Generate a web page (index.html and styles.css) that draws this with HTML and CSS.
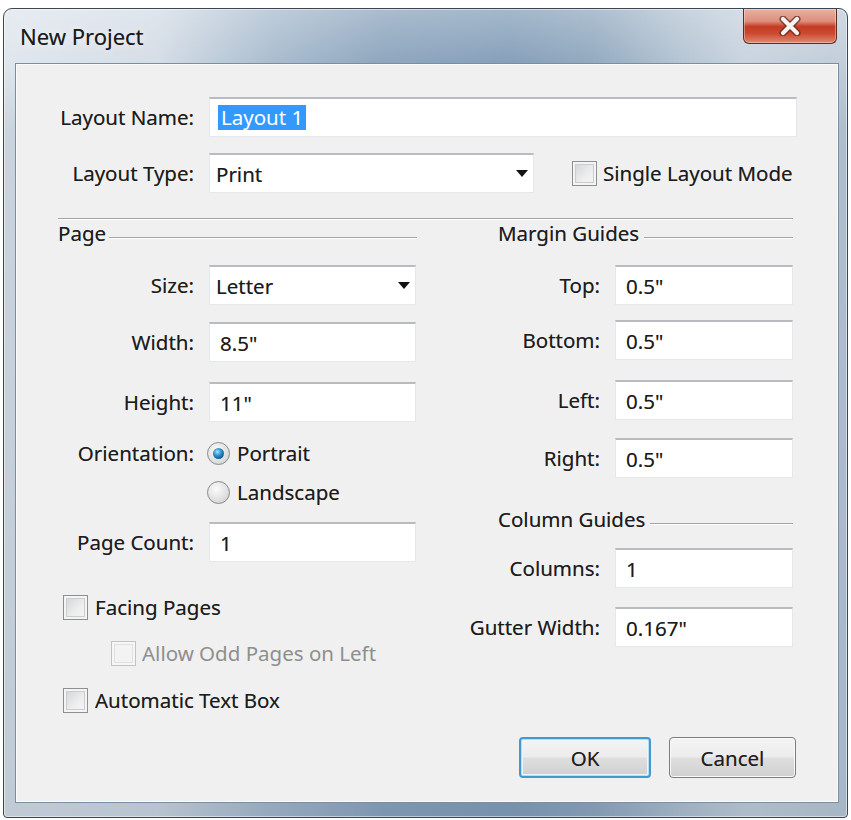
FILE: index.html
```html
<!DOCTYPE html>
<html lang="en">
<head>
<meta charset="utf-8">
<title>New Project</title>
<link rel="stylesheet" href="styles.css">
</head>
<body>
<div class="window">
  <div class="titlebar">
    <span class="title">New Project</span>
    <div class="close">
      <svg width="24" height="20" viewBox="0 0 24 20">
        <path d="M5 3 L19 17 M19 3 L5 17" stroke="#5a2419" stroke-width="7" stroke-linecap="round" fill="none" opacity="0.7"/>
        <path d="M5 3 L19 17 M19 3 L5 17" stroke="#f7f4f2" stroke-width="4.2" stroke-linecap="round" fill="none"/>
      </svg>
    </div>
  </div>
  <div class="client">
    <div class="row r-name">
      <span class="lbl lbl-l">Layout Name:</span>
      <div class="field name"><span class="selected">Layout 1</span></div>
    </div>
    <div class="row r-type">
      <span class="lbl lbl-l">Layout Type:</span>
      <div class="field select type"><span>Print</span><span class="arrow"></span></div>
      <div class="check single"><span class="box"></span><span>Single Layout Mode</span></div>
    </div>
    <div class="sep"></div>
    <div class="cols">
      <div class="col left">
        <div class="group"><span>Page</span><span class="gline gline-page"></span></div>
        <div class="row frow m20">
          <span class="lbl lbl-l">Size:</span>
          <div class="field select lfield"><span>Letter</span><span class="arrow"></span></div>
        </div>
        <div class="row frow m17">
          <span class="lbl lbl-l">Width:</span>
          <div class="field lfield">8.5"</div>
        </div>
        <div class="row frow m20">
          <span class="lbl lbl-l">Height:</span>
          <div class="field lfield">11"</div>
        </div>
        <div class="row orow m16">
          <span class="lbl lbl-l">Orientation:</span>
          <div class="radio-item"><span class="radio on"></span><span>Portrait</span></div>
        </div>
        <div class="row orow m9">
          <span class="lbl lbl-l"></span>
          <div class="radio-item"><span class="radio"></span><span>Landscape</span></div>
        </div>
        <div class="row frow m15">
          <span class="lbl lbl-l">Page Count:</span>
          <div class="field lfield">1</div>
        </div>
        <div class="check crow m30 c-first"><span class="box"></span><span>Facing Pages</span></div>
        <div class="check crow m16 c-indent disabled"><span class="box"></span><span>Allow Odd Pages on Left</span></div>
        <div class="check crow m17 c-first"><span class="box"></span><span>Automatic Text Box</span></div>
      </div>
      <div class="col right">
        <div class="group"><span>Margin Guides</span><span class="gline"></span></div>
        <div class="row frow m20">
          <span class="lbl lbl-r">Top:</span>
          <div class="field rfield">0.5"</div>
        </div>
        <div class="row frow m15">
          <span class="lbl lbl-r">Bottom:</span>
          <div class="field rfield">0.5"</div>
        </div>
        <div class="row frow m20">
          <span class="lbl lbl-r">Left:</span>
          <div class="field rfield">0.5"</div>
        </div>
        <div class="row frow m18">
          <span class="lbl lbl-r">Right:</span>
          <div class="field rfield">0.5"</div>
        </div>
        <div class="group m29"><span>Column Guides</span><span class="gline"></span></div>
        <div class="row frow m17">
          <span class="lbl lbl-r">Columns:</span>
          <div class="field rfield">1</div>
        </div>
        <div class="row frow m19">
          <span class="lbl lbl-r">Gutter Width:</span>
          <div class="field rfield">0.167"</div>
        </div>
        <div class="buttons">
          <div class="btn ok">OK</div>
          <div class="btn cancel">Cancel</div>
        </div>
      </div>
    </div>
  </div>
</div>
</body>
</html>
```

FILE: styles.css
```css
* { box-sizing: border-box; }
html, body { margin: 0; background: #ffffff; }
body {
  font-family: "Noto Sans", "Open Sans", "DejaVu Sans", sans-serif;
  font-size: 20.5px;
  color: #1c1c1c;
  text-shadow: 0 0 0.6px rgba(0, 0, 0, 0.45);
}

.window {
  margin: 8px 0 0 3px;
  width: 845px;
  height: 810px;
  border: 1px solid #3a4654;
  border-radius: 9px 9px 4px 4px;
  padding: 0 9px 15px 12px;
  display: flex;
  flex-direction: column;
  background:
    linear-gradient(to bottom, rgba(255,255,255,0.25) 0, rgba(255,255,255,0) 55px, rgba(50,80,110,0.12) 120px, rgba(50,80,110,0.18) 100%),
    linear-gradient(to right, #e0e6ed 0%, #d5dde6 18%, #a9bcce 32%, #8ea6be 45%, #86a0ba 60%, #93aac0 70%, #b4c4d3 80%, #c9d4df 88%, #c1cdd9 100%);
  box-shadow: inset 0 0 0 1px rgba(255,255,255,0.5);
}

.titlebar {
  height: 55px;
  flex: none;
  display: flex;
  align-items: flex-start;
  justify-content: space-between;
}
.title {
  margin: 12px 0 0 4px;
  font-size: 22px;
  line-height: 30px;
  color: #1a1a1a;
  text-shadow: 0 0 8px rgba(255,255,255,0.9), 0 0 0.6px rgba(0,0,0,0.5);
}
.close {
  width: 94px;
  height: 35px;
  margin-right: 1px;
  border: 1px solid #5e2b22;
  border-top: none;
  border-radius: 0 0 6px 6px;
  background: linear-gradient(to bottom, #e9b0a2 0%, #dd8f7c 36%, #c53a22 52%, #cb4a31 72%, #e08a72 100%);
  box-shadow: inset 0 0 0 1px rgba(255,255,255,0.35);
  display: flex;
  align-items: center;
  justify-content: center;
}

.client {
  flex: 1;
  background: #f0f0f0;
  box-shadow: 0 0 0 1px #7a8ea2, inset 0 0 0 1px #fbfbfb;
  padding: 33px 41px 0 42px;
}

.row { display: flex; align-items: center; }
.lbl {
  flex: none;
  display: flex;
  justify-content: flex-end;
  padding-right: 15px;
  white-space: nowrap;
}
.lbl-l { width: 151px; }
.lbl-r { width: 117px; }

.field {
  height: 40px;
  flex: none;
  background: #ffffff;
  border: 1px solid #e5e8eb;
  border-top: 2px solid #b8bcc1;
  display: flex;
  align-items: center;
  padding: 0 5px 0 10px;
  white-space: nowrap;
}
.select { padding-left: 6px; }
.arrow {
  margin-left: auto;
  width: 0;
  height: 0;
  border-left: 6px solid transparent;
  border-right: 6px solid transparent;
  border-top: 7px solid #121212;
}

.r-name { height: 40px; }
.name { flex: 1; padding-left: 8px; }
.selected {
  background: #3399ff;
  color: #ffffff;
  padding: 0 3px;
  line-height: 25px;
  text-shadow: none;
}

.r-type { margin-top: 16px; height: 40px; }
.type { width: 325px; }

.check { display: flex; align-items: center; gap: 6px; white-space: nowrap; }
.single { margin-left: 38px; }
.box {
  flex: none;
  width: 25px;
  height: 25px;
  border: 1px solid #8e8f8f;
  background: linear-gradient(135deg, #cfd2d6 0%, #eeeeee 60%, #f6f6f6 100%);
  box-shadow: inset 0 0 0 2px #f4f4f4, inset 0 0 0 3px #c9ccd0;
}
.disabled { color: #8e8e8e; text-shadow: none; }
.disabled .box {
  border-color: #c2c2c2;
  background: #f3f3f3;
  box-shadow: inset 0 0 0 2px #f6f6f6, inset 0 0 0 3px #e0e0e0;
}

.sep {
  height: 2px;
  border-top: 1px solid #a3a3a3;
  border-bottom: 1px solid #ffffff;
  margin: 25px 4px 0 0;
}

.cols { display: flex; margin-top: 1px; }
.left { width: 359px; flex: none; display: flex; flex-direction: column; }
.right { width: 295px; margin-left: 81px; flex: none; display: flex; flex-direction: column; }

.group {
  display: flex;
  align-items: center;
  height: 24px;
  line-height: 24px;
  white-space: nowrap;
}
.gline {
  flex: 1;
  height: 2px;
  border-top: 1px solid #a5a5a5;
  border-bottom: 1px solid #ffffff;
  margin: 10px 0 0 5px;
}
.gline-page { margin-left: 3px; }

.frow { height: 40px; }
.lfield { width: 207px; }
.rfield { width: 178px; }

.orow { height: 30px; }
.radio-item { display: flex; align-items: center; gap: 7px; margin-left: -2px; }
.radio {
  flex: none;
  width: 23px;
  height: 23px;
  border-radius: 50%;
  border: 1px solid #8a8a8a;
  background: radial-gradient(circle at 40% 35%, #fbfbfb 0%, #e6e6e6 45%, #c9c9c9 100%);
  display: flex;
  align-items: center;
  justify-content: center;
}
.radio.on::after {
  content: "";
  width: 11px;
  height: 11px;
  border-radius: 50%;
  background: radial-gradient(circle at 40% 35%, #a6e4ff 0%, #2b8fcc 40%, #0e4a78 85%);
}

.crow { height: 30px; }
.c-first { margin-left: 5px; gap: 7px; }
.c-indent { margin-left: 53px; }

.m9 { margin-top: 9px; }
.m15 { margin-top: 15px; }
.m16 { margin-top: 16px; }
.m17 { margin-top: 17px; }
.m18 { margin-top: 18px; }
.m19 { margin-top: 19px; }
.m20 { margin-top: 20px; }
.m29 { margin-top: 29px; }
.m30 { margin-top: 30px; }

.buttons {
  margin-top: 90px;
  margin-right: -3px;
  display: flex;
  justify-content: flex-end;
  gap: 18px;
}
.btn {
  height: 41px;
  border-radius: 4px;
  display: flex;
  align-items: center;
  justify-content: center;
  color: #1e1e1e;
  background: linear-gradient(to bottom, #f4f4f4 0%, #ececec 48%, #dedede 52%, #d0d0d0 100%);
}
.ok {
  width: 132px;
  border: 2px solid #4399cd;
  box-shadow: inset 0 0 0 1px #b7def5, inset 0 0 0 2px #eaf6fd;
}
.cancel {
  width: 127px;
  border: 1px solid #7d7d7d;
  box-shadow: inset 0 0 0 1px #fafafa;
}
```
